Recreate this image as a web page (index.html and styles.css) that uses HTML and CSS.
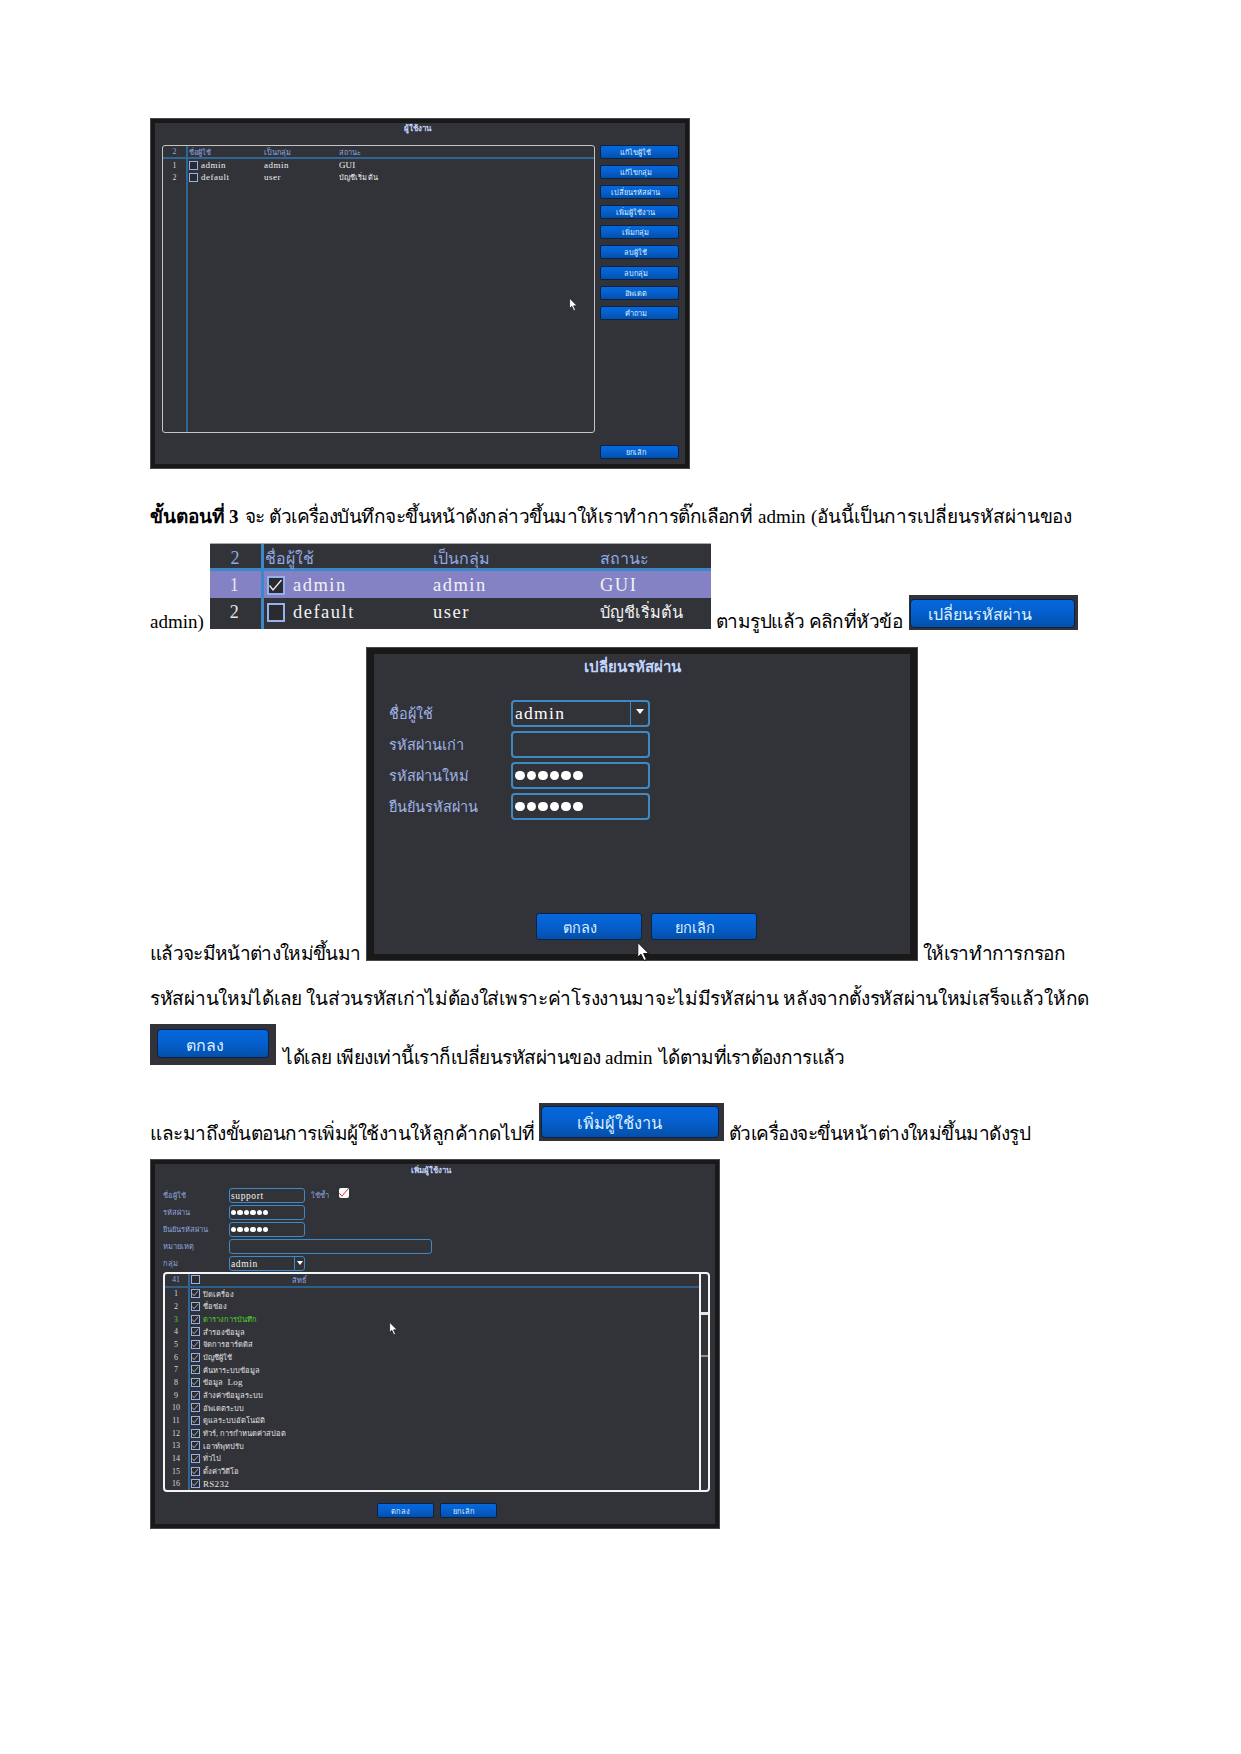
FILE: index.html
```
<!DOCTYPE html>
<html lang="th">
<head>
<meta charset="utf-8">
<title>ขั้นตอนที่ 3</title>
<link rel="stylesheet" href="styles.css">
</head>
<body>
<svg width="0" height="0" class="defs">
  <symbol id="tick" viewBox="0 0 14 14"><path d="M.5 7 4 11.500 12.500 1.500" fill="none" stroke="currentColor" stroke-width="1.300"/></symbol>
  <symbol id="pointer" viewBox="0 0 13 20"><path d="M.5.5V16l3.4-3.2L7 19.500l2.600-1.200-3-6.200h5.400z" fill="#fff" stroke="#111" stroke-width="1"/></symbol>
</svg>
<main class="page">

  <section class="window users">
    <h2 class="window-title">ผู้ใช้งาน</h2>
    <div class="users-body">
      <div class="users-table">
        <div class="row head"><span class="num">2</span><span class="name">ชื่อผู้ใช้</span><span class="group">เป็นกลุ่ม</span><span>สถานะ</span></div>
        <div class="row"><span class="num">1</span><span class="name"><i class="check"></i>admin</span><span class="group">admin</span><span class="gui">GUI</span></div>
        <div class="row"><span class="num">2</span><span class="name"><i class="check"></i>default</span><span class="group">user</span><span>บัญชีเริ่มต้น</span></div>
      </div>
      <div class="side">
        <span class="btn">แก้ไขผู้ใช้</span>
        <span class="btn">แก้ไขกลุ่ม</span>
        <span class="btn">เปลี่ยนรหัสผ่าน</span>
        <span class="btn">เพิ่มผู้ใช้งาน</span>
        <span class="btn">เพิ่มกลุ่ม</span>
        <span class="btn">ลบผู้ใช้</span>
        <span class="btn">ลบกลุ่ม</span>
        <span class="btn">อัพเดต</span>
        <span class="btn">คำถาม</span>
        <span class="btn cancel">ยกเลิก</span>
      </div>
    </div>
    <svg class="pointer"><use href="#pointer"/></svg>
  </section>

  <p class="line l1"><b>ขั้นตอนที่ 3</b><span class="a">จะ ตัวเครื่องบันทึกจะขึ้นหน้าดังกล่าวขึ้นมาให้เราทำการติ๊กเลือกที่</span><span class="latin">admin</span><span class="b">(อันนี้เป็นการเปลี่ยนรหัสผ่านของ</span></p>

  <div class="line l2">
    <span class="latin">admin)</span>
    <div class="excerpt">
      <div class="row head"><span class="num">2</span><span class="name">ชื่อผู้ใช้</span><span class="group">เป็นกลุ่ม</span><span>สถานะ</span></div>
      <div class="row picked"><span class="num">1</span><span class="name"><i class="check"><svg><use href="#tick"/></svg></i>admin</span><span class="group">admin</span><span>GUI</span></div>
      <div class="row"><span class="num">2</span><span class="name"><i class="check"></i>default</span><span class="group">user</span><span class="thai">บัญชีเริ่มต้น</span></div>
    </div>
    <span class="a">ตามรูปแล้ว คลิกที่หัวข้อ</span>
    <div class="snip change"><span class="btn">เปลี่ยนรหัสผ่าน</span></div>
  </div>

  <div class="line l3">
    <span class="a">แล้วจะมีหน้าต่างใหม่ขึ้นมา</span>
    <section class="window password">
      <h2 class="window-title">เปลี่ยนรหัสผ่าน</h2>
      <div class="fields">
        <label>ชื่อผู้ใช้</label><div class="field select">admin<i class="arrow"></i></div>
        <label>รหัสผ่านเก่า</label><div class="field"></div>
        <label>รหัสผ่านใหม่</label><div class="field dots"><i></i><i></i><i></i><i></i><i></i><i></i></div>
        <label>ยืนยันรหัสผ่าน</label><div class="field dots"><i></i><i></i><i></i><i></i><i></i><i></i></div>
      </div>
      <div class="actions"><span class="btn">ตกลง</span><span class="btn">ยกเลิก</span></div>
    </section>
    <svg class="pointer big"><use href="#pointer"/></svg>
    <span class="b">ให้เราทำการกรอก</span>
  </div>

  <p class="line l4"><span>รหัสผ่านใหม่ได้เลย ในส่วนรหัสเก่าไม่ต้องใส่เพราะค่าโรงงานมาจะไม่มีรหัสผ่าน หลังจากตั้งรหัสผ่านใหม่เสร็จแล้วให้กด</span></p>

  <div class="line l5">
    <div class="snip ok"><span class="btn">ตกลง</span></div>
    <span class="a">ได้เลย เพียงเท่านี้เราก็เปลี่ยนรหัสผ่านของ</span><span class="latin">admin</span><span class="b">ได้ตามที่เราต้องการแล้ว</span>
  </div>

  <div class="line l6">
    <span class="a">และมาถึงขั้นตอนการเพิ่มผู้ใช้งานให้ลูกค้ากดไปที่</span>
    <div class="snip add"><span class="btn">เพิ่มผู้ใช้งาน</span></div>
    <span class="b">ตัวเครื่องจะขึ่นหน้าต่างใหม่ขึ้นมาดังรูป</span>
  </div>

  <section class="window adduser">
    <h2 class="window-title">เพิ่มผู้ใช้งาน</h2>
    <div class="fields">
      <label>ชื่อผู้ใช้</label><div class="cell"><div class="field">support</div><span class="reuse">ใช้ซ้ำ</span><i class="redcheck"><svg><use href="#tick"/></svg></i></div>
      <label>รหัสผ่าน</label><div class="field dots"><i></i><i></i><i></i><i></i><i></i><i></i></div>
      <label>ยืนยันรหัสผ่าน</label><div class="field dots"><i></i><i></i><i></i><i></i><i></i><i></i></div>
      <label>หมายเหตุ</label><div class="field wide"></div>
      <label>กลุ่ม</label><div class="field select">admin<i class="arrow"></i></div>
    </div>
    <div class="rights">
      <div class="rights-list">
        <div class="row head"><span class="num">41</span><i class="check"></i><span class="rights-title">สิทธิ์</span></div>
        <div class="row"><span class="num">1</span><i class="check"><svg><use href="#tick"/></svg></i>ปิดเครื่อง</div>
        <div class="row"><span class="num">2</span><i class="check"><svg><use href="#tick"/></svg></i>ชื่อช่อง</div>
        <div class="row green"><span class="num">3</span><i class="check"><svg><use href="#tick"/></svg></i>ตารางการบันทึก</div>
        <div class="row"><span class="num">4</span><i class="check"><svg><use href="#tick"/></svg></i>สำรองข้อมูล</div>
        <div class="row"><span class="num">5</span><i class="check"><svg><use href="#tick"/></svg></i>จัดการฮาร์ดดิส</div>
        <div class="row"><span class="num">6</span><i class="check"><svg><use href="#tick"/></svg></i>บัญชีผู้ใช้</div>
        <div class="row"><span class="num">7</span><i class="check"><svg><use href="#tick"/></svg></i>ค้นหาระบบข้อมูล</div>
        <div class="row"><span class="num">8</span><i class="check"><svg><use href="#tick"/></svg></i>ข้อมูล&nbsp;<span class="latin">&nbsp;Log</span></div>
        <div class="row"><span class="num">9</span><i class="check"><svg><use href="#tick"/></svg></i>ล้างค่าข้อมูลระบบ</div>
        <div class="row"><span class="num">10</span><i class="check"><svg><use href="#tick"/></svg></i>อัพเดตระบบ</div>
        <div class="row"><span class="num">11</span><i class="check"><svg><use href="#tick"/></svg></i>ดูแลระบบอัตโนมัติ</div>
        <div class="row"><span class="num">12</span><i class="check"><svg><use href="#tick"/></svg></i>ทัวร์, การกำหนดค่าสปอต</div>
        <div class="row"><span class="num">13</span><i class="check"><svg><use href="#tick"/></svg></i>เอาท์พุทปรับ</div>
        <div class="row"><span class="num">14</span><i class="check"><svg><use href="#tick"/></svg></i>ทั่วไป</div>
        <div class="row"><span class="num">15</span><i class="check"><svg><use href="#tick"/></svg></i>ตั้งค่าวีดีโอ</div>
        <div class="row"><span class="num">16</span><i class="check"><svg><use href="#tick"/></svg></i><span class="latin">RS232</span></div>
      </div>
      <div class="scroll"><div class="thumb"></div><div class="thumb lower"></div></div>
    </div>
    <div class="actions"><span class="btn">ตกลง</span><span class="btn">ยกเลิก</span></div>
    <svg class="pointer"><use href="#pointer"/></svg>
  </section>
</main>
</body>
</html>
```
FILE: styles.css
```
* { box-sizing: border-box; }
body { margin: 0; background: #fff; color: #000; font-family: "Liberation Serif", serif; }
.defs { position: absolute; }
i { font-style: normal; display: block; flex: none; }
.page { width: 1241px; height: 1754px; padding: 118px 0 0 150px; overflow: hidden; }

/* document text */
.line { display: flex; align-items: flex-end; margin: 0; font-size: 19px; white-space: nowrap; }
.line > span, .line > b { line-height: 24px; margin-bottom: -5px; flex: none; }
.line > .latin { letter-spacing: 0; }
.l1 { height: 55px; }
.l1 b { width: 95px; letter-spacing: -.1px; }
.l1 .a { width: 513px; letter-spacing: -.54px; }
.l1 .latin { width: 53px; }
.l1 .b { letter-spacing: -.13px; }
.l2 { height: 105px; }
.l2 > .latin { width: 60px; }
.l2 > .a { width: 198px; padding-left: 5px; letter-spacing: -.57px; }
.l3 { height: 332px; position: relative; }
.l3 > .a { width: 216px; letter-spacing: -.67px; }
.l3 > .b { padding-left: 5px; letter-spacing: -.7px; }
.l4 { height: 45px; letter-spacing: -.29px; }
.l5 { height: 59px; }
.l5 > .a { width: 329px; padding-left: 7px; letter-spacing: -.5px; }
.l5 > .latin { width: 54px; }
.l5 > .b { letter-spacing: -.7px; }
.l6 { height: 76px; }
.l6 > .a { width: 389px; letter-spacing: -.48px; }
.l6 > .b { padding-left: 5px; letter-spacing: -.53px; }

/* shared recorder UI */
.window { position: relative; background: #323239; border: 5px solid #191919; outline: 1px solid #454a4c; outline-offset: -1px; flex: none; overflow: hidden; color: #fff; }
.window-title { margin: 0; text-align: center; font-weight: bold; color: #c3d5ff; white-space: nowrap; }
.btn { display: flex; align-items: center; justify-content: center; border: 1px solid #07224d; border-radius: 2px; background: linear-gradient(#0568dc, #0560cf 45%, #0450a9); color: #dff0ff; white-space: nowrap; }
.row { display: flex; align-items: center; white-space: nowrap; }
.row > span { flex: none; }
.num { text-align: center; color: #d8d8d8; }
.name { display: flex; align-items: center; }
.head, .head .num { color: #8ea9e2; }
.check { border: 1px solid #93b1ee; background: #2b2b2e; color: #e8eefc; }
.check svg, .redcheck svg { display: block; width: 100%; height: 100%; }
.field { display: flex; align-items: center; border: 2px solid #3d8ac6; border-radius: 4px; }
.dots i { border-radius: 50%; background: #fff; }
.select { position: relative; }
.arrow { position: absolute; right: 0; top: 0; bottom: 0; border-left: 1px solid #3d8ac6; }
.arrow::after { content: ""; position: absolute; left: 50%; border: solid transparent; border-top-color: #fff; border-bottom: 0; transform: translateX(-50%); }
.pointer { position: absolute; }

/* user list */
.users { width: 540px; height: 351px; font-size: 7.400px; }
.users .window-title { height: 22px; font-size: 8px; line-height: 12px; padding-right: 5px; }
.users-body { display: flex; padding-left: 7px; }
.users-table { width: 433px; height: 288px; border: 1px solid #c4c4c4; border-radius: 3px; background: linear-gradient(90deg, transparent 23px, #2f6693 23px 25px, transparent 25px); }
.users-table .row { height: 12.300px; color: #f0f0f0; }
.users-table .row.head { border-bottom: 2px solid #2f6693; height: 13px; color: #8ea9e2; }
.users-table .row > span:not(:first-child) { letter-spacing: .1px; }
.users-table .row:not(.head) .name, .users-table .row:not(.head) .group, .users-table .gui { font-size: 9px; }
.users-table .row:not(.head) .name, .users-table .row:not(.head) .group { letter-spacing: .5px; }
.users-table .num { width: 26px; padding-right: 3px; font-size: 8px; }
.users-table .name { width: 75px; }
.users-table .group { width: 75px; }
.users-table .check { width: 9px; height: 9px; margin-right: 3px; }
.side { width: 79px; height: 314px; margin-left: 5px; display: flex; flex-direction: column; gap: 6.100px; }
.side .btn { height: 14px; flex: none; padding-right: 8px; }
.side .cancel { margin-top: auto; }
.users .pointer { left: 414px; top: 175px; width: 9px; height: 13px; }

/* cropped list */
.excerpt { width: 501px; height: 86px; flex: none; overflow: hidden; color: #f2f2f2; background: #323239; border-top: 1px solid #aaa; position: relative; font-size: 18.500px; }
.excerpt::after { content: ""; position: absolute; left: 51px; top: 0; width: 3px; height: 100%; background: #3c87c8; }
.excerpt .row { height: 27px; letter-spacing: 1.500px; padding-top: 1px; }
.excerpt .row.head { height: 27px; border-bottom: 3px solid #3c87c8; padding-top: 5px; font-size: 16px; letter-spacing: -.1px; color: #8ea9e2; }
.excerpt .picked { background: #8481c5; }
.excerpt .num { width: 50px; font-size: 18px; color: #e6e6e6; }
.excerpt .head .num { color: #8ea9e2; }
.excerpt .name { width: 173px; padding-left: 7px; }
.excerpt .head .name { padding-left: 5px; }
.excerpt .group { width: 167px; }
.excerpt .check { width: 18px; height: 19px; border-width: 2px; margin-right: 8px; }
.excerpt .thai { font-size: 16.300px; letter-spacing: 0; }

/* cropped buttons */
.snip { flex: none; background: #323239; font-size: 16px; }
.snip .btn { justify-content: flex-start; border-radius: 4px; }
.change { width: 169px; height: 35px; padding: 4px 3px 2px 1px; margin-bottom: -1px; }
.change .btn { height: 29px; padding: 1px 0 0 17px; }
.ok { width: 126px; height: 41px; padding: 5px 7px 7px; }
.ok .btn { height: 29px; padding: 3px 0 0 28px; }
.add { width: 185px; height: 38px; padding: 3px 5px 3px 2px; }
.add .btn { height: 32px; padding: 2px 0 0 35px; font-size: 16.400px; }

/* password dialog */
.password { width: 552px; height: 314px; border-width: 7px 8px; font-size: 14.500px; }
.password .window-title { font-size: 15px; line-height: 20px; height: 46px; padding: 3px 20px 0 0; }
.password .fields { display: grid; grid-template-columns: 121px 139px; grid-auto-rows: 27px; row-gap: 4px; padding-left: 16px; }
.password label { line-height: 28px; margin-left: -1px; color: #9fb4e6; letter-spacing: -.05px; }
.password .select { padding-left: 2px; font-size: 17.500px; letter-spacing: 1.300px; }
.password .arrow { width: 18px; }
.password .arrow::after { top: 7px; border-width: 5px 4px 0; }
.password .dots { padding-left: 2px; gap: 2px; }
.password .dots i { width: 9.600px; height: 9.600px; }
.password .actions { display: flex; gap: 9px; padding: 93px 0 0 162px; }
.password .btn { width: 106px; height: 27px; border-radius: 3px; padding: 2px 18px 0 0; }
.pointer.big { left: 487px; bottom: 0; width: 13px; height: 19px; }

/* add-user window */
.adduser { width: 570px; height: 370px; margin-top: 18px; font-size: 7.500px; }
.adduser .window-title { font-size: 7.800px; line-height: 13px; height: 24px; padding-right: 8px; }
.adduser .fields { display: grid; grid-template-columns: 66px 204px; grid-auto-rows: 15px; row-gap: 2px; padding-left: 8px; }
.adduser label, .reuse { line-height: 15px; color: #8fa6de; }
.adduser .cell { display: flex; }
.adduser .field { width: 76px; height: 15px; border-width: 1px; border-radius: 3px; padding-left: 1px; color: #f4f4f4; font-size: 9.500px; letter-spacing: .6px; }
.adduser .field.wide { width: 203px; }
.adduser .dots i { width: 5.400px; height: 5.400px; margin-right: 1px; }
.reuse { margin-left: 6px; width: 28px; }
.redcheck { width: 10px; height: 10px; border-radius: 2px; background: #fff; color: #e21b1b; }
.adduser .arrow { width: 10px; }
.adduser .arrow::after { top: 4px; border-width: 4px 3px 0; }
.rights { display: flex; width: 547px; height: 220px; margin: 1px 0 0 8px; border: 2px solid #f4f4f4; border-radius: 4px; }
.rights-list { width: 534px; overflow: hidden; background: linear-gradient(90deg, transparent 23px, #2f6693 23px 25px, transparent 25px); }
.rights .row { height: 12.670px; color: #e2e2e2; }
.rights .row.head { height: 13.500px; border-bottom: 2px solid #2f5f88; color: #8ea9e2; }
.rights .num { width: 22px; font-size: 8px; }
.rights .check { width: 9px; height: 9px; margin: 0 3px 0 4px; }
.rights .latin { font-size: 9px; letter-spacing: .3px; }
.rights-title { padding-left: 89px; }
.rights .green, .rights .green .num { color: #4fd32c; }
.scroll { width: 9px; flex: none; border-left: 2px solid #f4f4f4; }
.thumb { height: 41px; border-bottom: 3px solid #e6e6e6; }
.thumb.lower { height: 42px; border-bottom: 2px solid #909094; }
.adduser .actions { display: flex; gap: 6px; padding: 11px 0 0 222px; }
.adduser .btn { width: 57px; height: 15px; padding-right: 10px; }
.adduser .pointer { left: 234px; top: 158px; width: 9px; height: 13px; }
```
